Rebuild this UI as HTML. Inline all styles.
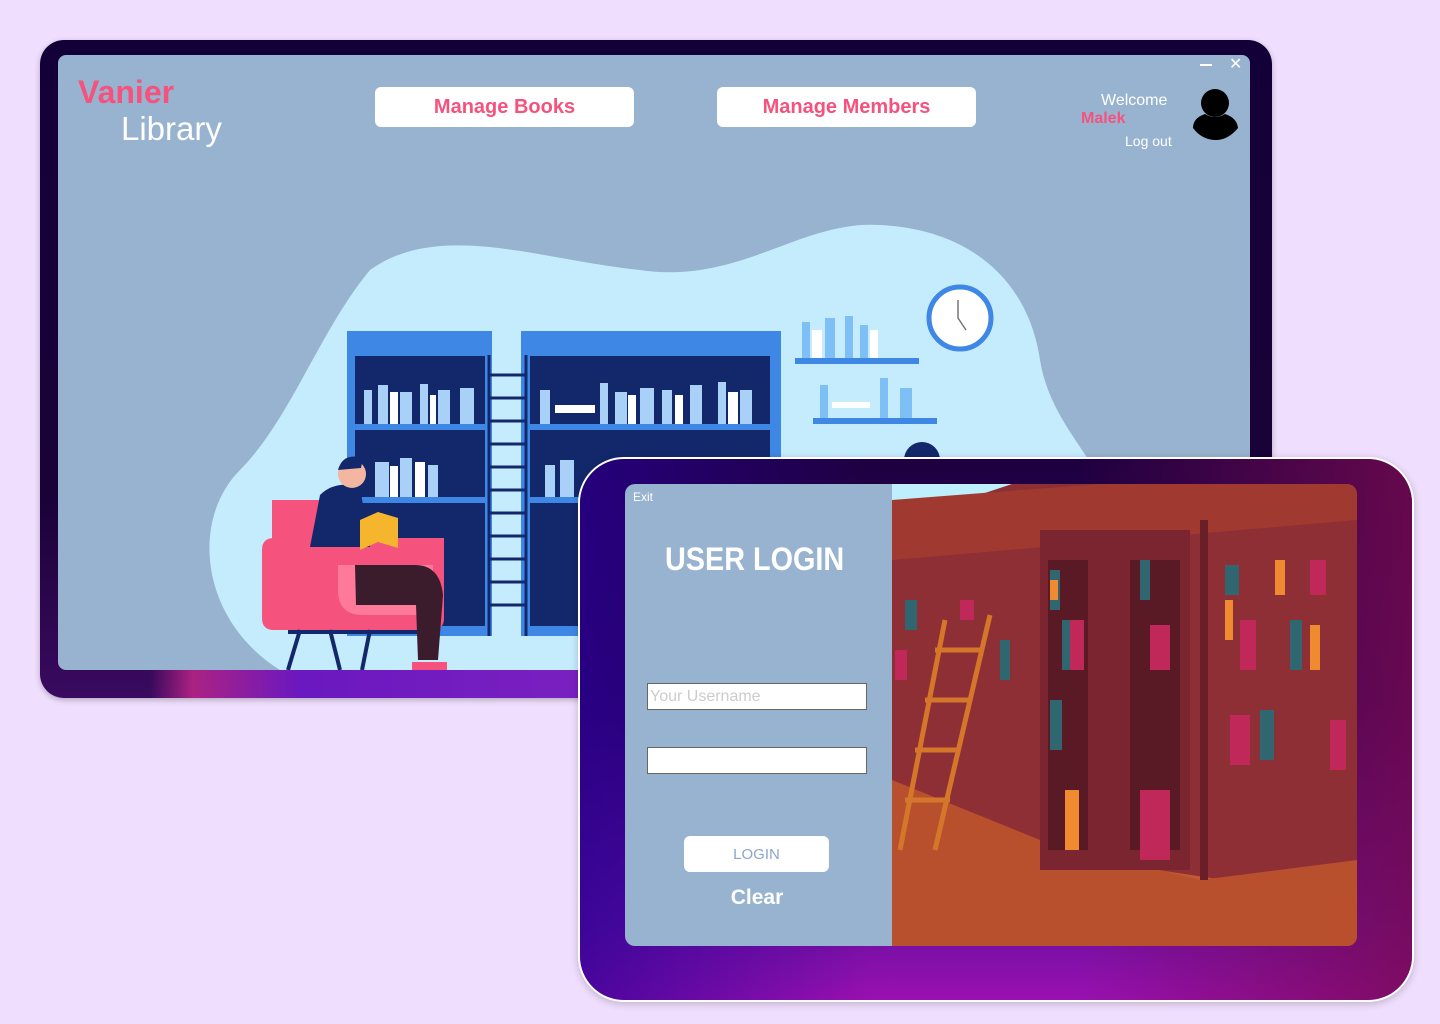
<!DOCTYPE html>
<html><head><meta charset="utf-8"><style>
*{margin:0;padding:0;box-sizing:border-box}
body{width:1440px;height:1024px;background:#efdefd;position:relative;overflow:hidden;font-family:"Liberation Sans",sans-serif}
.a{position:absolute}
#w1{left:40px;top:40px;width:1232px;height:658px;border-radius:24px;background:linear-gradient(180deg,#140038 0%,#1a0238 70%,#3a0a60 100%);box-shadow:0 2px 6px rgba(0,0,0,.25)}
#w1g{left:150px;top:670px;width:430px;height:28px;background:linear-gradient(90deg,rgba(200,40,120,.0),rgba(200,40,140,.8) 10%,#6a18c0 35%,#7a20c0 100%)}
#w1in{left:58px;top:55px;width:1192px;height:615px;border-radius:8px;background:#98b3cf;overflow:hidden}
.btn{background:#fff;border-radius:6px;color:#f5527d;font-weight:bold;font-size:20px;text-align:center;line-height:40px;height:40px}
#w2{left:578px;top:457px;width:836px;height:545px;border-radius:46px;background:linear-gradient(180deg,#1e0040 0%,#2a0058 45%,#6a10a0 85%,#9a10b0 100%);border:2px solid #fff;box-shadow:0 2px 8px rgba(0,0,0,.2);overflow:hidden}
#w2b{left:580px;top:459px;width:832px;height:541px;border-radius:44px;background:linear-gradient(90deg,rgba(40,0,150,.7) 0%,rgba(40,0,150,0) 35%,rgba(0,0,0,0) 60%,rgba(120,10,80,.8) 100%)}
#lp{left:625px;top:484px;width:267px;height:462px;background:#98b3cf;border-radius:10px 0 0 10px}
#img{left:892px;top:484px;width:465px;height:462px;border-radius:0 10px 10px 0;overflow:hidden;background:#8a3030}
.inp{background:#fff;border:1px solid #666;height:27px;width:220px;left:647px}
</style></head><body>
<div id="w1" class="a"></div>
<div id="w1g" class="a"></div>
<div id="w1in" class="a">
<svg width="1192" height="615" viewBox="58 55 1192 615" style="position:absolute;left:0;top:0">
<path d="M280 670 C200 620 190 520 240 470 C290 420 320 330 370 270 C440 220 540 260 640 270 C740 285 800 220 880 225 C980 230 1030 290 1040 360 C1050 420 1090 450 1110 500 L1110 670 Z" fill="#c5ecfd"/>
<rect x="347" y="331" width="145" height="305" fill="#3f87e5"/>
<rect x="355" y="356" width="130" height="270" fill="#13286a"/>
<rect x="521" y="331" width="260" height="305" fill="#3f87e5"/>
<rect x="530" y="356" width="240" height="270" fill="#13286a"/>
<g fill="#3f87e5"><rect x="355" y="424" width="130" height="6"/><rect x="355" y="497" width="130" height="6"/><rect x="530" y="424" width="240" height="6"/><rect x="530" y="497" width="240" height="6"/></g>
<g fill="#a9d0f7"><rect x="364" y="390" width="8" height="34"/><rect x="378" y="385" width="10" height="39"/><rect x="400" y="392" width="12" height="32"/><rect x="420" y="384" width="8" height="40"/><rect x="438" y="390" width="12" height="34"/><rect x="460" y="388" width="14" height="36"/>
<rect x="540" y="390" width="10" height="34"/><rect x="600" y="383" width="8" height="41"/><rect x="615" y="392" width="12" height="32"/><rect x="640" y="388" width="14" height="36"/><rect x="662" y="390" width="10" height="34"/><rect x="690" y="385" width="12" height="39"/><rect x="718" y="382" width="8" height="42"/><rect x="740" y="390" width="12" height="34"/>
<rect x="375" y="462" width="14" height="35"/><rect x="400" y="458" width="12" height="39"/><rect x="428" y="465" width="10" height="32"/><rect x="545" y="465" width="10" height="32"/><rect x="560" y="460" width="14" height="37"/></g>
<g fill="#fff"><rect x="390" y="392" width="8" height="32"/><rect x="430" y="395" width="6" height="29"/><rect x="555" y="405" width="40" height="8"/><rect x="628" y="395" width="8" height="29"/><rect x="675" y="395" width="8" height="29"/><rect x="728" y="392" width="10" height="32"/><rect x="390" y="466" width="8" height="31"/><rect x="415" y="462" width="10" height="35"/></g>
<g stroke="#13286a" stroke-width="3"><line x1="489" y1="355" x2="489" y2="636"/><line x1="526" y1="355" x2="526" y2="636"/>
<path d="M489 375H526M489 398H526M489 421H526M489 444H526M489 467H526M489 490H526M489 513H526M489 536H526M489 559H526M489 582H526M489 605H526"/></g>
<rect x="795" y="358" width="124" height="6" fill="#3f87e5"/><rect x="813" y="418" width="124" height="6" fill="#3f87e5"/>
<g fill="#7ec0f5"><rect x="802" y="322" width="8" height="36"/><rect x="825" y="318" width="10" height="40"/><rect x="845" y="316" width="8" height="42"/><rect x="860" y="325" width="8" height="33"/><rect x="820" y="385" width="8" height="33"/><rect x="880" y="378" width="8" height="40"/><rect x="900" y="388" width="12" height="30"/></g>
<g fill="#fff"><rect x="812" y="330" width="10" height="28"/><rect x="870" y="330" width="8" height="28"/><rect x="832" y="402" width="38" height="6"/></g>
<circle cx="960" cy="318" r="31" fill="#fff" stroke="#3f87e5" stroke-width="5"/>
<path d="M958 300V318L966 330" stroke="#777" stroke-width="1.5" fill="none"/>
<path d="M272 500h60v130h-60z" fill="#f5527d"/><path d="M262 550 q0-12 12-12h170v80q0 12-12 12h-158q-12 0-12-12z" fill="#f5527d"/>
<path d="M338 565h95v50h-70q-25 0-25-25z" fill="#ff7a9a"/>
<g stroke="#13286a" stroke-width="4"><line x1="300" y1="630" x2="288" y2="670"/><line x1="330" y1="630" x2="340" y2="670"/><line x1="370" y1="630" x2="362" y2="670"/><line x1="288" y1="632" x2="420" y2="632"/></g>
<path d="M320 495 q15-15 40-8 l10 60 h-60z" fill="#13286a"/>
<path d="M355 565 h60 q25 0 28 30 l-5 65 h-20 l-2-55 h-60z" fill="#3a1c2c"/>
<circle cx="352" cy="474" r="14" fill="#f4b6a0"/><path d="M338 470 q5-18 25-12 l-2 10z" fill="#13286a"/>
<path d="M360 520 l18 -8 l20 6 v30 l-20-6 l-18 8z" fill="#f5b62d"/>
<path d="M412 662 h35 v8 h-35z" fill="#f5527d"/>
<circle cx="922" cy="460" r="18" fill="#13286a"/>
</svg>
</div>
<div class="a" style="left:78px;top:74px;font-size:32px;font-weight:bold;color:#f5527d">Vanier</div>
<div class="a" style="left:121px;top:110px;font-size:33px;color:#fff">Library</div>
<div class="a btn" style="left:375px;top:87px;width:259px">Manage Books</div>
<div class="a btn" style="left:717px;top:87px;width:259px">Manage Members</div>
<div class="a" style="left:1200px;top:64px;width:12px;height:2px;background:#fff"></div>
<div class="a" style="left:1229px;top:54px;color:#fff;font-size:16px">✕</div>
<div class="a" style="left:1101px;top:92px;color:#fff;font-size:16px">Welcome</div>
<div class="a" style="left:1081px;top:110px;color:#f5527d;font-size:16px;font-weight:bold">Malek</div>
<div class="a" style="left:1125px;top:133px;color:#fff;font-size:14px">Log out</div>
<svg class="a" style="left:1190px;top:86px" width="52" height="56"><circle cx="25" cy="17" r="14"/><path d="M3 42 q0-10 12-14 q10 6 20 0 q12 4 13 14 q-10 12-22 12 q-14 0-23-12z"/></svg>

<div id="w2" class="a"></div>
<div id="w2b" class="a"></div>
<div id="lp" class="a"></div>
<div id="img" class="a">
<svg width="465" height="462" viewBox="892 484 465 462">
<rect x="892" y="484" width="465" height="462" fill="#8e2f35"/>
<path d="M892 484h120l-120 40z" fill="#bdeffc"/>
<path d="M892 500 L1100 484 L1357 484 L1357 520 L892 560z" fill="#a03a30"/>
<path d="M892 830 L1357 900 V946 H892z" fill="#c25a35"/>
<path d="M892 780 L1040 840 L1200 880 L1357 860 V946 H892z" fill="#b8502e"/>
<rect x="1040" y="530" width="150" height="340" fill="#7a2530"/>
<rect x="1048" y="560" width="40" height="290" fill="#5a1a25"/><rect x="1130" y="560" width="50" height="290" fill="#5a1a25"/>
<g fill="#2f6670"><rect x="1050" y="570" width="10" height="40"/><rect x="1062" y="620" width="10" height="50"/><rect x="1140" y="560" width="10" height="40"/><rect x="1225" y="565" width="14" height="30"/><rect x="1290" y="620" width="12" height="50"/><rect x="1260" y="710" width="14" height="50"/><rect x="1050" y="700" width="12" height="50"/><rect x="905" y="600" width="12" height="30"/><rect x="1000" y="640" width="10" height="40"/></g>
<g fill="#c0285a"><rect x="1070" y="620" width="14" height="50"/><rect x="1150" y="625" width="20" height="45"/><rect x="1240" y="620" width="16" height="50"/><rect x="1230" y="715" width="20" height="50"/><rect x="1310" y="560" width="16" height="35"/><rect x="895" y="650" width="12" height="30"/><rect x="1140" y="790" width="30" height="70"/><rect x="1330" y="720" width="16" height="50"/><rect x="960" y="600" width="14" height="20"/></g>
<g fill="#f08a30"><rect x="1225" y="600" width="8" height="40"/><rect x="1275" y="560" width="10" height="35"/><rect x="1310" y="625" width="10" height="45"/><rect x="1065" y="790" width="14" height="60"/><rect x="1050" y="580" width="8" height="20"/></g>
<g stroke="#d4772a" stroke-width="5" fill="none"><line x1="945" y1="620" x2="900" y2="850"/><line x1="990" y1="615" x2="935" y2="850"/><path d="M935 650h45M925 700h45M915 750h45M905 800h45"/></g>
<rect x="1200" y="520" width="8" height="360" fill="#6a1f28"/>
</svg>
</div>
<div class="a" style="left:633px;top:490px;color:#fff;font-size:12px">Exit</div>
<div class="a" style="left:665px;top:541px;color:#fff;font-size:32px;font-weight:bold;transform:scaleX(0.9);transform-origin:left">USER LOGIN</div>
<div class="a inp" style="top:683px;color:#ccc;font-size:16px;padding-left:2px;line-height:25px">Your Username</div>
<div class="a inp" style="top:747px"></div>
<div class="a" style="left:684px;top:836px;width:145px;height:36px;background:#fff;border-radius:6px;color:#8aa6c8;font-size:15px;text-align:center;line-height:38px">LOGIN</div>
<div class="a" style="left:625px;top:886px;width:264px;text-align:center;color:#fff;font-size:21px;font-weight:bold">Clear</div>
</body></html>
